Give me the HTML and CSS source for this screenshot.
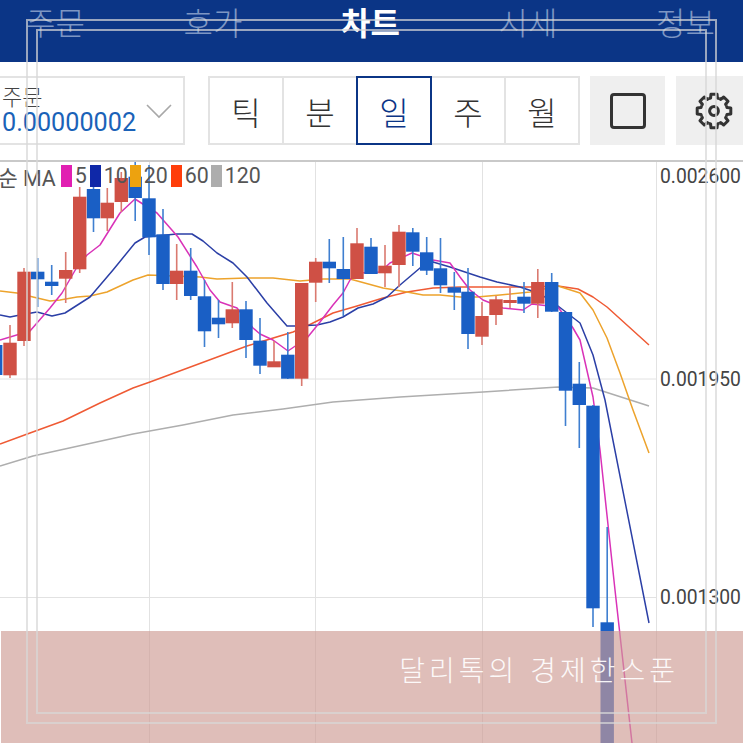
FILE: index.html
```
<!DOCTYPE html>
<html lang="ko">
<head>
<meta charset="utf-8">
<title>차트</title>
<link rel="stylesheet" href="styles.css">
</head>
<body>
<div class="page">
  <nav class="tabs">
    <span class="tab">주문</span>
    <span class="tab">호가</span>
    <span class="tab active">차트</span>
    <span class="tab">시세</span>
    <span class="tab">정보</span>
  </nav>
  <div class="toolbar">
    <div class="combo">
      <div class="combo-text">
        <span class="combo-label">주문</span>
        <span class="combo-value">0.00000002</span>
      </div>
      <svg class="chevron" width="26" height="16" viewBox="0 0 26 16"><path d="M1 2L13 14L25 2"/></svg>
    </div>
    <div class="periods">
      <span class="period">틱</span>
      <span class="period">분</span>
      <span class="period selected">일</span>
      <span class="period">주</span>
      <span class="period">월</span>
    </div>
    <div class="tool">
      <span class="square"></span>
    </div>
    <div class="tool tool-last">
      <svg class="gear" width="40" height="40" viewBox="-20 -20 40 40">
        <path d="M-5.17-12.47L-3.4-13L-3.04-16.8H3.04L3.4-13L5.17-12.47"/>
        <path transform="rotate(45)" d="M-5.17-12.47L-3.4-13L-3.04-16.8H3.04L3.4-13L5.17-12.47"/>
        <path transform="rotate(90)" d="M-5.17-12.47L-3.4-13L-3.04-16.8H3.04L3.4-13L5.17-12.47"/>
        <path transform="rotate(135)" d="M-5.17-12.47L-3.4-13L-3.04-16.8H3.04L3.4-13L5.17-12.47"/>
        <path transform="rotate(180)" d="M-5.17-12.47L-3.4-13L-3.04-16.8H3.04L3.4-13L5.17-12.47"/>
        <path transform="rotate(225)" d="M-5.17-12.47L-3.4-13L-3.04-16.8H3.04L3.4-13L5.17-12.47"/>
        <path transform="rotate(270)" d="M-5.17-12.47L-3.4-13L-3.04-16.8H3.04L3.4-13L5.17-12.47"/>
        <path transform="rotate(315)" d="M-5.17-12.47L-3.4-13L-3.04-16.8H3.04L3.4-13L5.17-12.47"/>
        <circle r="4.4"/>
      </svg>
    </div>
  </div>
  <div class="chart">
    <svg class="plot" width="743" height="581" viewBox="0 162 743 581">
      <g class="grid">
        <path d="M149.5 162V743M315.5 162V743M482.5 162V743M656.5 162V743M0 379H656M0 597.5H656"/>
      </g>
      <g class="ma">
        <path class="ma120" d="M0 466L33 456L83 445L133 434L183 425L233 415L283 409L333 402L400 397L483 392L558 387L593 388L649 406"/>
        <path class="ma60" d="M0 444L30 433L63 421L100 403L133 388L150 382L247 346L293 332L307 326L333 313L357 306L383 298L407 292L433 288L460 287L530 287L558 286L578 289L593 297L607 307L649 345"/>
        <path class="ma20" d="M0 291L17 293L33 297L50 301L60 300L77 297L90 296L107 292L133 280L148 275L200 277L217 279L247 278L273 278L300 281L323 279L350 279L383 288L407 292L423 295L440 295L460 297L477 297L500 295L530 292L558 286L580 293L593 310L607 338L620 373L633 410L649 453"/>
        <path class="ma10" d="M0 315L10 317L20 315L37 312L52 316L65 313L90 297L113 270L135 243L145 237L177 234L192 234L203 241L217 253L233 263L247 277L267 303L287 326L295 326L317 325L330 322L343 317L358 308L373 304L387 297L400 285L420 268L433 262L450 267L480 277L497 282L520 287L532 291L545 297L558 306L580 323L593 355L605 400L649 623"/>
        <path class="ma5" d="M0 340L30 331L50 308L62 293L77 267L87 255L100 245L120 213L135 199L157 213L178 237L197 267L210 290L220 302L237 308L253 328L260 334L273 340L288 351L307 338L320 322L333 305L343 293L350 280L358 273L380 272L390 263L412 253L433 260L450 263L460 277L470 290L483 300L503 308L523 310L532 304L558 307L573 328L580 340L593 397L600 450L615 590L632 743"/>
      </g>
      <g class="down">
        <path d="M-4 330V390M37.7 258V307M51.7 265V295M93.5 180V232M135.2 160V221M149 165V255M163 209V290M190.7 248V300M204.5 280V347M218.5 300V338M246 301V358M260 318V374M287.8 332V379M329.3 239V283M343.3 237V316M371 238V274M412.8 228V266M426.7 237V275M440.5 238V293M454.3 272V310M468 268V349M524 282V313M551.7 273V312M565.5 312V426M579.3 362V448M593 405V627M607.2 527V743"/>
        <rect x="-11" y="345" width="13.4" height="30"/>
        <rect x="31" y="271.7" width="13.4" height="7.6"/>
        <rect x="45" y="281.7" width="13.4" height="4.3"/>
        <rect x="86.8" y="189" width="13.4" height="29.3"/>
        <rect x="128.5" y="176.7" width="13.4" height="21.3"/>
        <rect x="142.3" y="198.3" width="13.4" height="39"/>
        <rect x="156.3" y="234.3" width="13.4" height="49.7"/>
        <rect x="184" y="270.7" width="13.4" height="25.3"/>
        <rect x="197.8" y="296.3" width="13.4" height="35"/>
        <rect x="211.8" y="317.7" width="13.4" height="6.6"/>
        <rect x="239.3" y="309.3" width="13.4" height="30.7"/>
        <rect x="253.3" y="340.7" width="13.4" height="25"/>
        <rect x="281.1" y="354.7" width="13.4" height="24"/>
        <rect x="322.6" y="261.7" width="13.4" height="6.6"/>
        <rect x="336.6" y="269" width="13.4" height="10"/>
        <rect x="364.3" y="246.7" width="13.4" height="27.3"/>
        <rect x="406.1" y="232.3" width="13.4" height="19.4"/>
        <rect x="420" y="252.3" width="13.4" height="18.4"/>
        <rect x="433.8" y="268.3" width="13.4" height="17"/>
        <rect x="447.6" y="287.3" width="13.4" height="5.4"/>
        <rect x="461.3" y="291.7" width="13.4" height="42.3"/>
        <rect x="517.3" y="296.7" width="13.4" height="7"/>
        <rect x="545" y="282" width="13.4" height="29.7"/>
        <rect x="558.8" y="312" width="13.4" height="78.7"/>
        <rect x="572.6" y="383.7" width="13.4" height="21.3"/>
        <rect x="586.3" y="405.7" width="13.4" height="202.6"/>
        <rect x="600.5" y="622.3" width="13.4" height="121"/>
      </g>
      <g class="up">
        <path d="M10 325V378M24 268V346M65.7 252V303M79.7 187V273M107.3 188V231M121.3 172V212M176.7 244V300M232.3 282V328M274 341V367M301.7 283V386M315.7 258V302M357 228V279M385 245V287M399 225V287M482 302V345M496 296V325M510 288V308M537.8 269V318"/>
        <rect x="3.3" y="342.7" width="13.4" height="32.6"/>
        <rect x="17.3" y="271.7" width="13.4" height="69.3"/>
        <rect x="59" y="270" width="13.4" height="8.7"/>
        <rect x="73" y="196.7" width="13.4" height="72.6"/>
        <rect x="100.6" y="202.7" width="13.4" height="15.6"/>
        <rect x="114.6" y="178" width="13.4" height="24"/>
        <rect x="170" y="270.7" width="13.4" height="13.3"/>
        <rect x="225.6" y="309.3" width="13.4" height="14"/>
        <rect x="267.3" y="361.3" width="13.4" height="6"/>
        <rect x="295" y="283" width="13.4" height="95.7"/>
        <rect x="309" y="261.7" width="13.4" height="21"/>
        <rect x="350.3" y="243.3" width="13.4" height="35.7"/>
        <rect x="378.3" y="265.7" width="13.4" height="7.6"/>
        <rect x="392.3" y="231.7" width="13.4" height="33.3"/>
        <rect x="475.3" y="316" width="13.4" height="20.7"/>
        <rect x="489.3" y="299.3" width="13.4" height="15.7"/>
        <rect x="503.3" y="300" width="13.4" height="3"/>
        <rect x="531.1" y="282" width="13.4" height="21.7"/>
      </g>
    </svg>
    <div class="legend">
      <span class="legend-name">순 MA</span>
      <i class="swatch s5"></i><span class="legend-num n5">5</span>
      <i class="swatch s10"></i><span class="legend-num n10">10</span>
      <i class="swatch s20"></i><span class="legend-num n20">20</span>
      <i class="swatch s60"></i><span class="legend-num n60">60</span>
      <i class="swatch s120"></i><span class="legend-num">120</span>
    </div>
    <span class="price p1">0.002600</span>
    <span class="price p2">0.001950</span>
    <span class="price p3">0.001300</span>
  </div>
  <div class="banner"><span class="banner-text">달리톡의 경제한스푼</span></div>
  <div class="frame frame-outer"></div>
  <div class="frame frame-inner"></div>
</div>
</body>
</html>
```

FILE: styles.css
```
* { box-sizing: border-box; }
html, body { margin: 0; padding: 0; background: #fff; }
.page {
  position: relative;
  width: 743px;
  height: 743px;
  overflow: hidden;
  display: flex;
  flex-direction: column;
  font-family: "Noto Sans CJK KR", Roboto, sans-serif;
}

.tabs {
  height: 62px;
  flex: none;
  background: #0b3586;
  display: flex;
  padding-bottom: 20px;
  padding-right: 2px;
  align-items: center;
  justify-content: center;
}
.tab {
  flex: none;
  width: 157.5px;
  text-align: center;
  font-size: 32px;
  line-height: 42px;
  color: #7d96c3;
  font-weight: 300;
}
.tab.active { color: #fff; font-weight: 700; }

.toolbar {
  height: 98px;
  flex: none;
  display: flex;
  padding-top: 14px;
  padding-bottom: 15px;
  margin-left: -20px;
  width: 790px;
}
.combo {
  width: 205px;
  flex: none;
  border: 2px solid #e3e3e3;
  display: flex;
  align-items: center;
  justify-content: space-between;
  padding: 0 11px 0 20px;
  margin-right: 23px;
}
.combo-text { display: flex; flex-direction: column; }
.combo-label {
  font-size: 22px;
  line-height: 25px;
  color: #444;
  font-weight: 300;
}
.combo-value {
  font-family: Roboto, sans-serif;
  font-size: 25.2px;
  line-height: 30px;
  color: #1a62b8;
}
.chevron { fill: none; stroke: #a8a8a8; stroke-width: 1.6; }

.periods {
  width: 372px;
  flex: none;
  display: flex;
  border: 2px solid #e3e3e3;
  margin-right: 10px;
}
.period {
  flex: 1;
  display: flex;
  align-items: center;
  justify-content: center;
  font-size: 32px;
  color: #333;
  font-weight: 300;
  border-left: 2px solid #e3e3e3;
}
.period:first-child { border-left: 0; }
.period.selected {
  color: #0b3586;
  border: 2px solid #0b3586;
  margin: -2px 0;
}
.period.selected + .period { border-left: 0; }

.tool {
  width: 75px;
  flex: none;
  background: #efefef;
  display: flex;
  align-items: center;
  justify-content: center;
  margin-right: 11px;
}
.square {
  width: 36px;
  height: 36px;
  border: 3px solid #333;
  border-radius: 4px;
}
.gear { fill: none; stroke: #333; stroke-width: 3; stroke-linejoin: round; }

.chart {
  flex: 1;
  position: relative;
  border-top: 2px solid #c9c9c9;
}
.plot { position: absolute; left: 0; top: 0; display: block; }
.grid path { fill: none; stroke: #e2e2e2; stroke-width: 1; }
.ma path { fill: none; stroke-width: 1.5; stroke-linejoin: round; }
.ma5 { stroke: #d932b8; }
.ma10 { stroke: #2b3fa6; }
.ma20 { stroke: #eda32c; }
.ma60 { stroke: #ef5a34; }
.ma120 { stroke: #aeaeae; }
.down path { fill: none; stroke: #3f7fd0; stroke-width: 1.6; }
.down rect { fill: #1a5fc5; }
.up path { fill: none; stroke: #da7a70; stroke-width: 1.6; }
.up rect { fill: #cf5045; }

.legend {
  position: absolute;
  left: -2px;
  top: 3px;
  display: flex;
  align-items: center;
  height: 22px;
  font-family: Roboto, "Noto Sans CJK KR", sans-serif;
  font-size: 21.4px;
  color: #555;
}
.legend-name { width: 62.7px; }
.swatch { width: 11px; height: 22px; flex: none; margin-right: 3px; }
.s5 { background: #e11fb2; }
.s10 { background: #0f28a8; }
.s20 { background: #eda20f; }
.s60 { background: #ff3d0a; }
.s120 { background: #adadad; }
.legend-num { line-height: 22px; }
.n5 { width: 15px; }
.n10 { width: 26px; }
.n20 { width: 27px; }
.n60 { width: 26px; }

.price {
  position: absolute;
  left: 660px;
  font-family: Roboto, sans-serif;
  font-size: 19.3px;
  line-height: 22px;
  color: #444;
}
.p1 { top: 4px; }
.p2 { top: 207px; }
.p3 { top: 425px; }

.banner {
  position: absolute;
  left: 1px;
  right: 0;
  top: 631px;
  height: 112px;
  background: rgba(206, 155, 147, 0.65);
  display: flex;
  justify-content: flex-end;
  padding: 16px 64px 0 0;
}
.banner-text {
  font-size: 28px;
  line-height: 44px;
  letter-spacing: 4px;
  color: #fff;
  font-weight: 300;
  opacity: 0.92;
}
.frame {
  position: absolute;
  border: 2px solid rgba(215, 215, 215, 0.7);
}
.frame-outer { left: 26px; top: 19px; width: 691px; height: 705px; }
.frame-inner { left: 36px; top: 29px; width: 671px; height: 685px; }
```
